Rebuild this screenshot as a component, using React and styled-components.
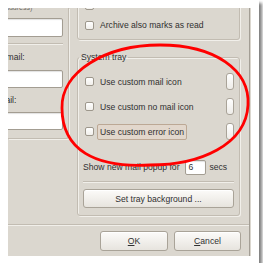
import React from 'react'
import styled, { createGlobalStyle } from 'styled-components'

const GlobalStyle = createGlobalStyle`
  html, body {
    margin: 0;
    padding: 0;
    background: #fff;
  }
  body {
    font-family: "Liberation Sans", Arial, sans-serif;
  }
  * {
    box-sizing: border-box;
  }
`

const Photo = styled.div`
  position: relative;
  width: 259px;
  height: 263px;
  padding: 8px 8px 7px 8px;
  background: #fff;
  box-shadow: 3px 3px 3px rgba(0, 0, 0, 0.5);
`

const Window = styled.div`
  width: 243px;
  height: 248px;
  overflow: hidden;
  display: flex;
  background: #dbd7cf;
  color: #303030;
  font-size: 8.6px;
`

const Content = styled.div`
  width: 241px;
  flex: none;
  display: flex;
  flex-direction: column;
`

const Edge = styled.div`
  flex: 1;
  border-left: 1px solid #a39e95;
`

const Main = styled.div`
  height: 216px;
  flex: none;
  display: flex;
`

const LeftPane = styled.div`
  width: 61px;
  height: 131px;
  flex: none;
  overflow: hidden;
  border-right: 1px solid #c2bcb2;
  border-bottom: 1px solid #c2bcb2;
  border-bottom-right-radius: 3px;
  box-shadow: 1px 1px 0 #f1efea;
`

const LeftInner = styled.div`
  width: 81px;
  margin-left: -26px;
  display: flex;
  flex-direction: column;
`

const Hint = styled.div`
  font-size: 7px;
  line-height: 8px;
  height: 8px;
  margin-top: -4px;
  color: #6f6c66;
  white-space: nowrap;
`

const Entry = styled.div`
  height: ${p => p.$h || 18}px;
  margin-top: ${p => p.$mt || 0}px;
  background: #fff;
  border: 1px solid #a39d92;
  border-radius: 2px;
  box-shadow: inset 0 1px 1px rgba(0, 0, 0, 0.12);
  display: flex;
  align-items: center;
  padding-left: 3px;
  line-height: 10px;
`

const Separator = styled.div`
  height: 2px;
  flex: none;
  margin-top: ${p => p.$mt || 0}px;
  border-top: 1px solid #c2bcb2;
  border-bottom: 1px solid #f1efea;
`

const FieldLabel = styled.div`
  line-height: 10px;
  height: 10px;
  margin-top: ${p => p.$mt || 0}px;
  white-space: nowrap;
`

const RightPane = styled.div`
  width: 180px;
  flex: none;
  padding: 0 9px 0 8px;
  display: flex;
  flex-direction: column;
`

const Frame = styled.div`
  height: 52px;
  margin-top: -20px;
  padding: 6px 5px 0 5px;
  border: 1px solid #c2bcb2;
  border-radius: 3px;
  box-shadow: inset 1px 1px 0 #f1efea, 1px 1px 0 #f1efea;
`

const TrayFrame = styled.fieldset`
  margin: 12px 0 0 0;
  padding: 7px 5px 7px 5px;
  min-width: 0;
  border: 1px solid #c2bcb2;
  border-radius: 3px;
  box-shadow: inset 1px 1px 0 #f1efea, 1px 1px 0 #f1efea;
  display: flex;
  flex-direction: column;
`

const Legend = styled.legend`
  margin-left: -4px;
  padding: 0 2px;
  line-height: 10px;
  font-size: 8.6px;
`

const CheckRow = styled.div`
  height: ${p => p.$h}px;
  flex: none;
  padding-left: 2px;
  display: flex;
  align-items: center;
`

const Box = styled.span`
  width: 9px;
  height: 9px;
  flex: none;
  background: linear-gradient(#ffffff, #f1efeb);
  border: 1px solid #9d978c;
  border-radius: 2px;
`

const CheckLabel = styled.span`
  margin-left: 3px;
  height: 16px;
  padding: 0 2px;
  display: flex;
  align-items: center;
  white-space: nowrap;
  border: 1px solid ${p => (p.$hover ? '#bca895' : 'transparent')};
  border-radius: 2px;
  background: ${p => (p.$hover ? '#e2d7cc' : 'transparent')};
`

const SideButton = styled.span`
  width: 8px;
  height: 17px;
  margin-left: auto;
  flex: none;
  background: linear-gradient(#ffffff, #eeece8);
  border: 1px solid #a9a398;
  border-radius: 3px;
`

const ShowRow = styled.div`
  height: 20px;
  margin-top: 13px;
  display: flex;
  align-items: center;
  white-space: nowrap;
`

const Spin = styled.span`
  width: 21px;
  height: 15px;
  margin: 0 4px 0 5px;
  padding-left: 3px;
  display: flex;
  align-items: center;
  background: #fff;
  border: 1px solid #a39d92;
  border-radius: 2px;
  box-shadow: inset 0 1px 1px rgba(0, 0, 0, 0.12);
`

const Button = styled.button`
  width: ${p => p.$w}px;
  height: ${p => p.$h || 20}px;
  margin-top: ${p => p.$mt || 0}px;
  flex: none;
  padding: 0;
  font-family: "Liberation Sans", Arial, sans-serif;
  font-size: 8.6px;
  color: #303030;
  background: linear-gradient(#fcfbf9, #e7e4de);
  border: 1px solid #a9a398;
  border-radius: 3px;
  box-shadow: inset 0 1px 0 #fff;
`

const ButtonRow = styled.div`
  display: flex;
  justify-content: flex-end;
  gap: 6px;
  padding: 5px 8px 0 0;
`

const Annotation = styled.svg`
  position: absolute;
  left: 0;
  top: 0;
  pointer-events: none;
`

const Check = ({ h = 25, label, hover, side }) => (
  <CheckRow $h={h}>
    <Box />
    <CheckLabel $hover={hover}>{label}</CheckLabel>
    {side && <SideButton />}
  </CheckRow>
)

const App = () => {
  return (
    <>
      <GlobalStyle />
      <Photo>
        <Window>
          <Content>
            <Main>
              <LeftPane>
                <LeftInner>
                  <Hint>(user@address)</Hint>
                  <Entry $h={19} $mt={6} />
                  <Separator $mt={6} />
                  <FieldLabel $mt={7}>Your email:</FieldLabel>
                  <Entry $mt={8} />
                  <FieldLabel $mt={7}>To email:</FieldLabel>
                  <Entry $mt={7} />
                </LeftInner>
              </LeftPane>

              <RightPane>
                <Frame>
                  <Check h={20} label="Mark as read on close" />
                  <Check h={20} label="Archive also marks as read" />
                </Frame>

                <TrayFrame>
                  <Legend>System tray</Legend>
                  <Check label="Use custom mail icon" side />
                  <Check label="Use custom no mail icon" side />
                  <Check label="Use custom error icon" hover side />
                  <ShowRow>
                    Show new mail popup for
                    <Spin>6</Spin>
                    secs
                  </ShowRow>
                  <Separator $mt={4} />
                  <Button $w={151} $h={19} $mt={6}>Set tray background ...</Button>
                </TrayFrame>
              </RightPane>
            </Main>

            <Separator />
            <ButtonRow>
              <Button $w={68}><u>O</u>K</Button>
              <Button $w={67}><u>C</u>ancel</Button>
            </ButtonRow>
          </Content>
          <Edge />
        </Window>

        <Annotation width="263" height="269" viewBox="0 0 263 269">
          <path
            d="M 62 108 C 61 72, 105 45, 160 45 C 215 45, 250 70, 248 105 C 246 145, 200 165, 150 165 C 95 168, 62 150, 62 108"
            fill="none"
            stroke="#f00"
            strokeWidth="2.8"
            strokeLinecap="round"
          />
        </Annotation>
      </Photo>
    </>
  )
}

export default App
